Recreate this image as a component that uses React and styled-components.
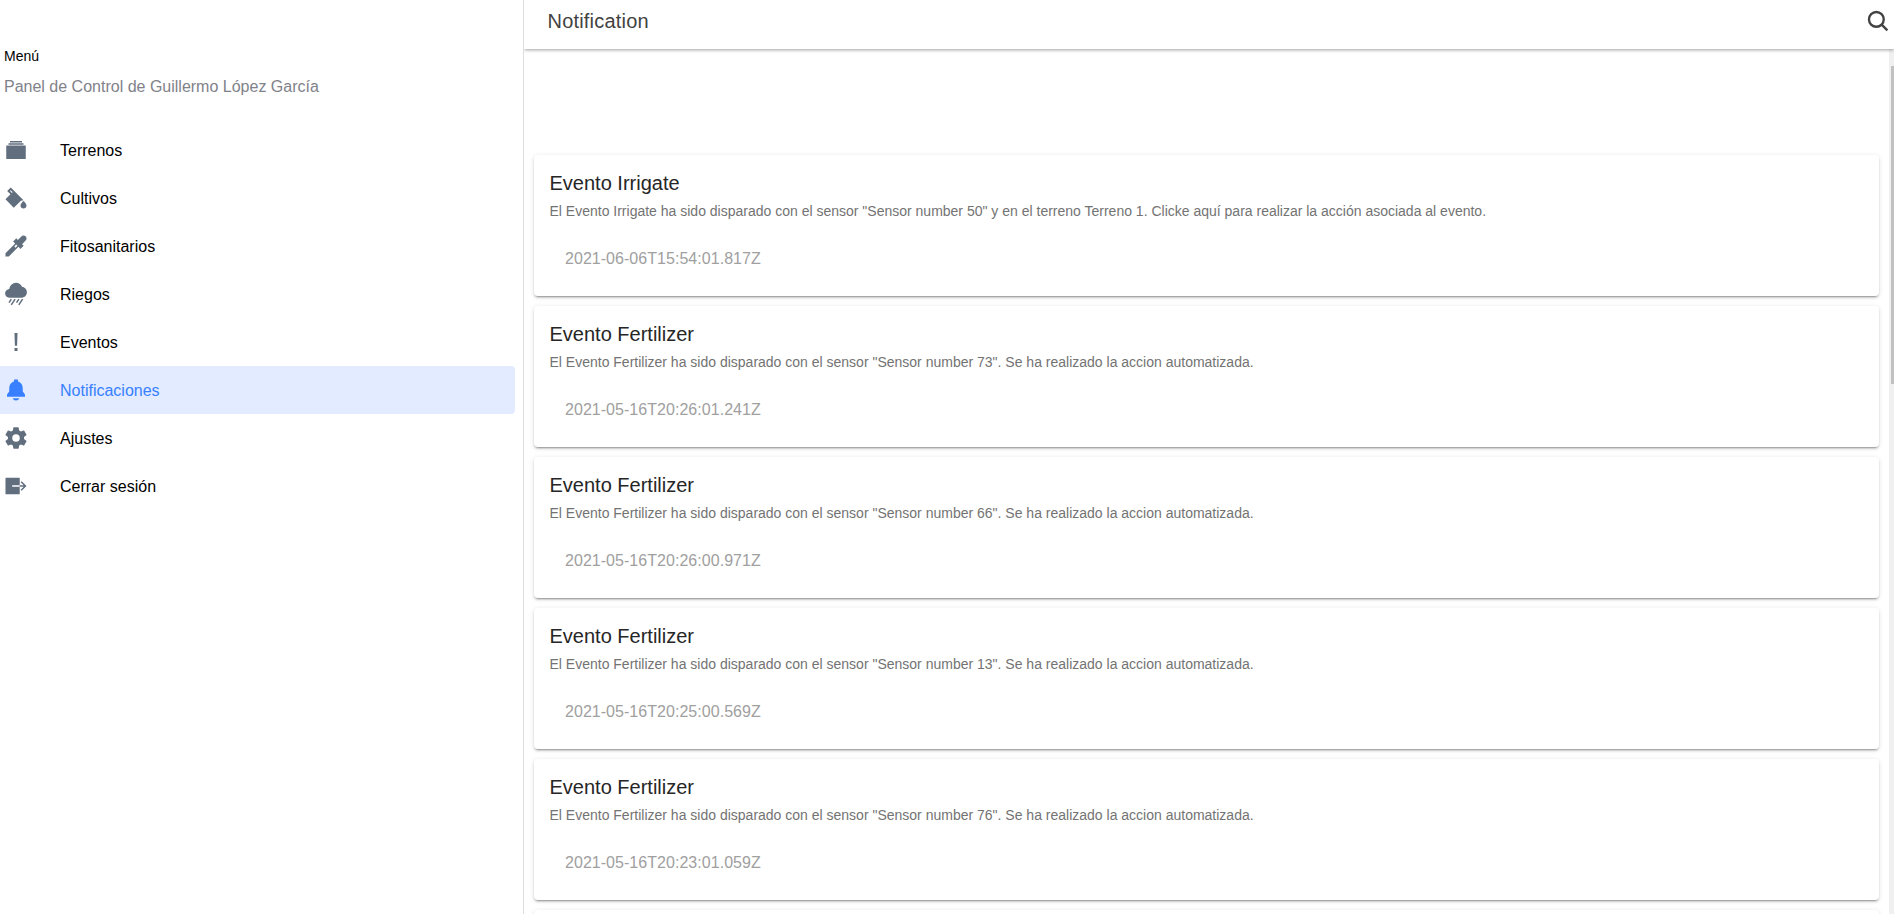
import React from "react";
import styled, { createGlobalStyle } from "styled-components";
import {
  IoAlbumsSharp,
  IoColorFillSharp,
  IoEyedropSharp,
  IoRainySharp,
  IoAlertSharp,
  IoNotificationsSharp,
  IoSettingsSharp,
  IoExitSharp,
} from "react-icons/io5";

const GlobalStyle = createGlobalStyle`
  * { box-sizing: border-box; }
  body {
    margin: 0;
    overflow: hidden;
    background: #fff;
    font-family: "Liberation Sans", Arial, sans-serif;
  }
`;

const Page = styled.div`
  display: flex;
  height: 100vh;
`;

const Menu = styled.nav`
  flex: 0 0 524px;
  padding: 47px 8px 0 0;
  border-right: 1px solid #dedede;
`;

const MenuTitle = styled.h1`
  margin: 0;
  padding-left: 4px;
  font-size: 14px;
  font-weight: 400;
  line-height: 18px;
  color: #000;
`;

const MenuNote = styled.p`
  margin: 12px 0 30px;
  padding-left: 4px;
  font-size: 16px;
  line-height: 19px;
  color: #808289;
`;

const MenuItem = styled.a`
  display: flex;
  align-items: center;
  gap: 32px;
  height: 48px;
  padding-left: 4px;
  border-radius: 0 4px 4px 0;
  font-size: 16px;
  color: ${(p) => (p.$active ? "#3880ff" : "#000")};
  background: ${(p) => (p.$active ? "#e2ebff" : "transparent")};

  svg {
    width: 24px;
    height: 24px;
    color: ${(p) => (p.$active ? "#3880ff" : "#616e7e")};
  }
`;

const MenuLabel = styled.span`
  padding-top: 2px;
  line-height: 18px;
`;

const Main = styled.main`
  flex: 1;
  min-width: 0;
  display: flex;
  flex-direction: column;
`;

const Toolbar = styled.header`
  position: relative;
  z-index: 1;
  flex: 0 0 49px;
  display: flex;
  align-items: flex-start;
  justify-content: space-between;
  padding: 9px 4px 0 23.5px;
  background: #fff;
  color: #424242;
  box-shadow: 0 2px 4px -1px rgba(0, 0, 0, 0.2), 0 1px 3px rgba(0, 0, 0, 0.2);
  clip-path: inset(0 0 -10px 0);
`;

const SearchIcon = styled.svg`
  width: 24px;
  height: 24px;
  fill: none;
  stroke: currentColor;
  stroke-width: 50;
`;

const ToolbarTitle = styled.h2`
  margin: 0;
  font-size: 20px;
  font-weight: 400;
  line-height: 24px;
  letter-spacing: 0.2px;
`;

const Content = styled.div`
  flex: 1;
  min-height: 0;
  display: flex;
`;

const List = styled.div`
  flex: 1;
  display: flex;
  flex-direction: column;
  gap: 10px;
  padding: 106px 10px 0;
  overflow: hidden;
`;

const Track = styled.div`
  flex: 0 0 5px;
  padding: 17px 0 0 2px;
  background: #f0f0f0;
`;

const Thumb = styled.div`
  height: 318px;
  background: #c1c1c1;
`;

const Card = styled.article`
  flex: 0 0 141px;
  padding: 16px 15.5px;
  border-radius: 4px;
  background: #fff;
  box-shadow: 0 3px 1px -2px rgba(0, 0, 0, 0.2),
    0 2px 2px 0 rgba(0, 0, 0, 0.14), 0 1px 5px 0 rgba(0, 0, 0, 0.12);
`;

const CardTitle = styled.h3`
  margin: 0;
  font-size: 20px;
  font-weight: 400;
  line-height: 24px;
  color: #262626;
`;

const CardSubtitle = styled.p`
  margin: 8px 0 0;
  font-size: 14px;
  line-height: 16px;
  color: #737373;
`;

const CardDate = styled.p`
  margin: 30px 0 0 15.5px;
  font-size: 16px;
  line-height: 19px;
  letter-spacing: 0.04px;
  color: #a0a0a0;
`;

const menu = [
  ["Terrenos", IoAlbumsSharp],
  ["Cultivos", IoColorFillSharp],
  ["Fitosanitarios", IoEyedropSharp],
  ["Riegos", IoRainySharp],
  ["Eventos", IoAlertSharp],
  ["Notificaciones", IoNotificationsSharp],
  ["Ajustes", IoSettingsSharp],
  ["Cerrar sesión", IoExitSharp],
];

const automated = (n) =>
  `El Evento Fertilizer ha sido disparado con el sensor "Sensor number ${n}". Se ha realizado la accion automatizada.`;

const events = [
  {
    title: "Evento Irrigate",
    text: 'El Evento Irrigate ha sido disparado con el sensor "Sensor number 50" y en el terreno Terreno 1. Clicke aquí para realizar la acción asociada al evento.',
    date: "2021-06-06T15:54:01.817Z",
  },
  { title: "Evento Fertilizer", text: automated(73), date: "2021-05-16T20:26:01.241Z" },
  { title: "Evento Fertilizer", text: automated(66), date: "2021-05-16T20:26:00.971Z" },
  { title: "Evento Fertilizer", text: automated(13), date: "2021-05-16T20:25:00.569Z" },
  { title: "Evento Fertilizer", text: automated(76), date: "2021-05-16T20:23:01.059Z" },
];

export default function App() {
  return (
    <Page>
      <GlobalStyle />
      <Menu>
        <MenuTitle>Menú</MenuTitle>
        <MenuNote>Panel de Control de Guillermo López García</MenuNote>
        {menu.map(([label, Icon]) => (
          <MenuItem key={label} $active={label === "Notificaciones"}>
            <Icon />
            <MenuLabel>{label}</MenuLabel>
          </MenuItem>
        ))}
      </Menu>
      <Main>
        <Toolbar>
          <ToolbarTitle>Notification</ToolbarTitle>
          <SearchIcon viewBox="0 0 512 512">
            <circle cx="221" cy="221" r="158" />
            <path d="M334 334 456 456" />
          </SearchIcon>
        </Toolbar>
        <Content>
          <List>
            {events.map((e) => (
              <Card key={e.date}>
                <CardTitle>{e.title}</CardTitle>
                <CardSubtitle>{e.text}</CardSubtitle>
                <CardDate>{e.date}</CardDate>
              </Card>
            ))}
            <Card />
          </List>
          <Track>
            <Thumb />
          </Track>
        </Content>
      </Main>
    </Page>
  );
}
